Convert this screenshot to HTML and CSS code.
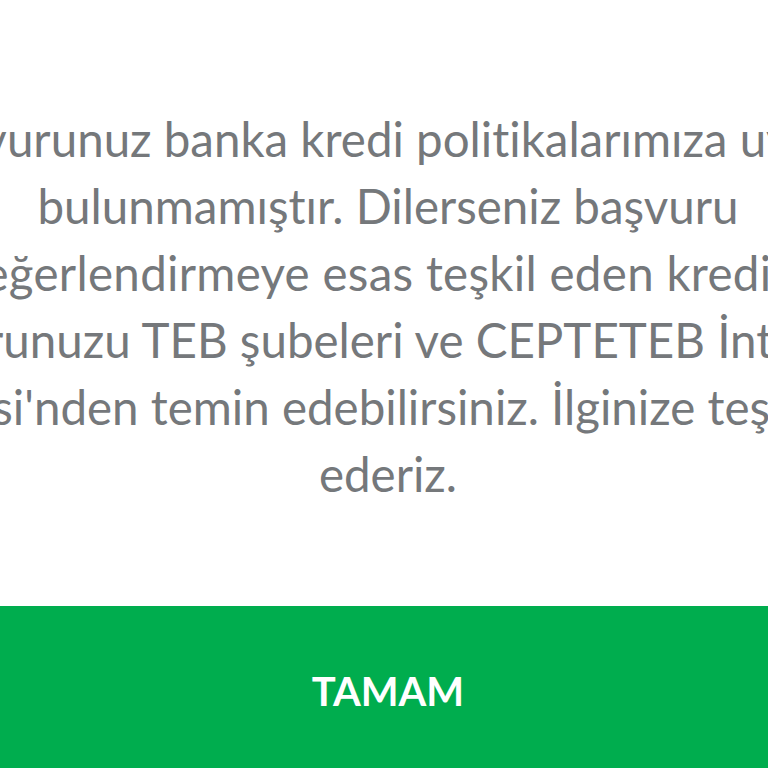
FILE: index.html
```html
<!DOCTYPE html>
<html lang="tr">
<head>
<meta charset="utf-8">
<link rel="stylesheet" href="styles.css">
</head>
<body>
<div class="dialog">
  <div class="message">
    <p class="text">
      <span class="line">Başvurunuz banka kredi politikalarımıza uygun</span>
      <span class="line">bulunmamıştır. Dilerseniz başvuru</span>
      <span class="line line-3">değerlendirmeye esas teşkil eden kredi</span>
      <span class="line">raporunuzu TEB şubeleri ve CEPTETEB İnternet</span>
      <span class="line">Şubesi'nden temin edebilirsiniz. İlginize teşekkür</span>
      <span class="line">ederiz.</span>
    </p>
  </div>
  <div class="button">TAMAM</div>
</div>
</body>
</html>
```
FILE: styles.css
```css
html, body {
  margin: 0;
  padding: 0;
  background: #ffffff;
}
.dialog {
  width: 768px;
  height: 768px;
  display: flex;
  flex-direction: column;
  overflow: hidden;
}
.message {
  flex: 1;
  display: flex;
  justify-content: center;
  padding-top: 105px;
  padding-left: 8px;
}
.text {
  margin: 0;
  display: flex;
  flex-direction: column;
  align-items: center;
  white-space: nowrap;
  text-align: center;
  font-family: Lato, "Noto Sans", sans-serif;
  font-size: 47.5px;
  line-height: 67px;
  color: #75787b;
  font-variant-ligatures: none;
  font-feature-settings: "liga" 0, "clig" 0;
}
.line {
  display: block;
}
.line-3 {
  margin-right: 48px;
  letter-spacing: 0.3px;
}
.button {
  height: 162px;
  flex: none;
  background: #00ad4e;
  color: #ffffff;
  font-family: Lato, sans-serif;
  font-weight: 700;
  font-size: 40px;
  display: flex;
  align-items: center;
  justify-content: center;
  padding-left: 8px;
  padding-top: 8px;
  box-sizing: border-box;
}
```
